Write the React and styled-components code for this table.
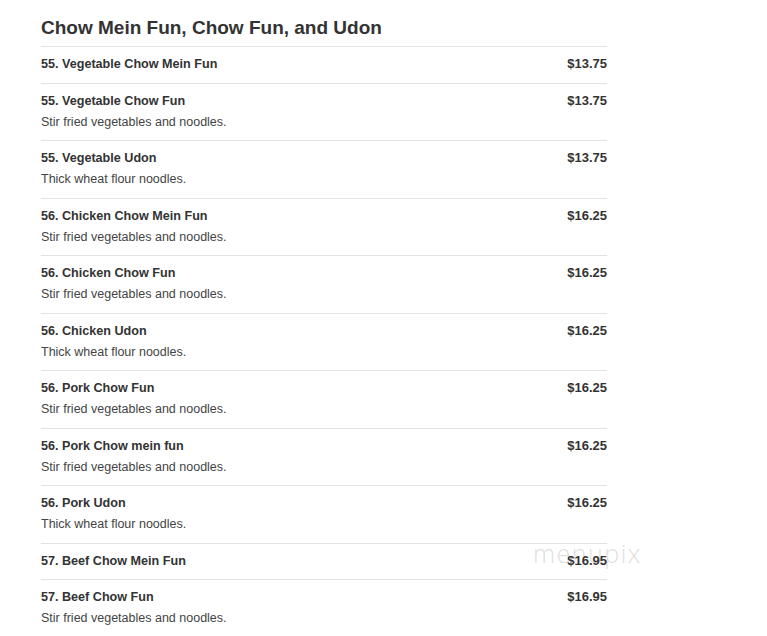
import React from "react";
import styled, { createGlobalStyle } from "styled-components";

const GlobalStyle = createGlobalStyle`
  body {
    margin: 0;
    background: #fff;
    font-family: "Liberation Sans", Arial, sans-serif;
    color: #333;
  }
`;

const Page = styled.div`
  position: relative;
  padding: 16px 0 0 41px;
  width: 566px;
`;

const Title = styled.h2`
  margin: 0 0 6px;
  font-size: 19px;
  line-height: 24px;
  font-weight: bold;
  color: #333;
`;

const List = styled.ul`
  position: relative;
  z-index: 1;
  list-style: none;
  margin: 0;
  padding: 0;
`;

const Item = styled.li`
  border-top: 1px solid #e3e3e3;
  padding: 8px 0 9.5px;
  display: flex;
  justify-content: space-between;
  align-items: flex-start;
`;

const Info = styled.div`
  display: flex;
  flex-direction: column;
`;

const Name = styled.span`
  font-size: 12.6px;
  line-height: 18px;
  font-weight: bold;
  color: #333;
`;

const Desc = styled.span`
  margin-top: 3px;
  font-size: 12.5px;
  line-height: 18px;
  color: #444;
`;

const Price = styled.span`
  font-size: 13px;
  line-height: 18px;
  font-weight: bold;
  color: #333;
`;

const Watermark = styled.div`
  position: absolute;
  z-index: 0;
  left: 533px;
  top: 536px;
  font-size: 25px;
  letter-spacing: 1.5px;
  color: rgba(170, 170, 170, 0.4);
  font-family: "Open Sans", sans-serif;
  font-weight: 300;
  pointer-events: none;
`;

const STIR = "Stir fried vegetables and noodles.";
const THICK = "Thick wheat flour noodles.";

const items = [
  { name: "55. Vegetable Chow Mein Fun", price: "$13.75" },
  { name: "55. Vegetable Chow Fun", price: "$13.75", desc: STIR },
  { name: "55. Vegetable Udon", price: "$13.75", desc: THICK },
  { name: "56. Chicken Chow Mein Fun", price: "$16.25", desc: STIR },
  { name: "56. Chicken Chow Fun", price: "$16.25", desc: STIR },
  { name: "56. Chicken Udon", price: "$16.25", desc: THICK },
  { name: "56. Pork Chow Fun", price: "$16.25", desc: STIR },
  { name: "56. Pork Chow mein fun", price: "$16.25", desc: STIR },
  { name: "56. Pork Udon", price: "$16.25", desc: THICK },
  { name: "57. Beef Chow Mein Fun", price: "$16.95" },
  { name: "57. Beef Chow Fun", price: "$16.95", desc: STIR },
];

export default function App() {
  return (
    <>
      <GlobalStyle />
      <Page>
        <Title>Chow Mein Fun, Chow Fun, and Udon</Title>
        <Watermark>menupix</Watermark>
        <List>
          {items.map((item, i) => (
            <Item key={i}>
              <Info>
                <Name>{item.name}</Name>
                {item.desc && <Desc>{item.desc}</Desc>}
              </Info>
              <Price>{item.price}</Price>
            </Item>
          ))}
        </List>
      </Page>
    </>
  );
}
